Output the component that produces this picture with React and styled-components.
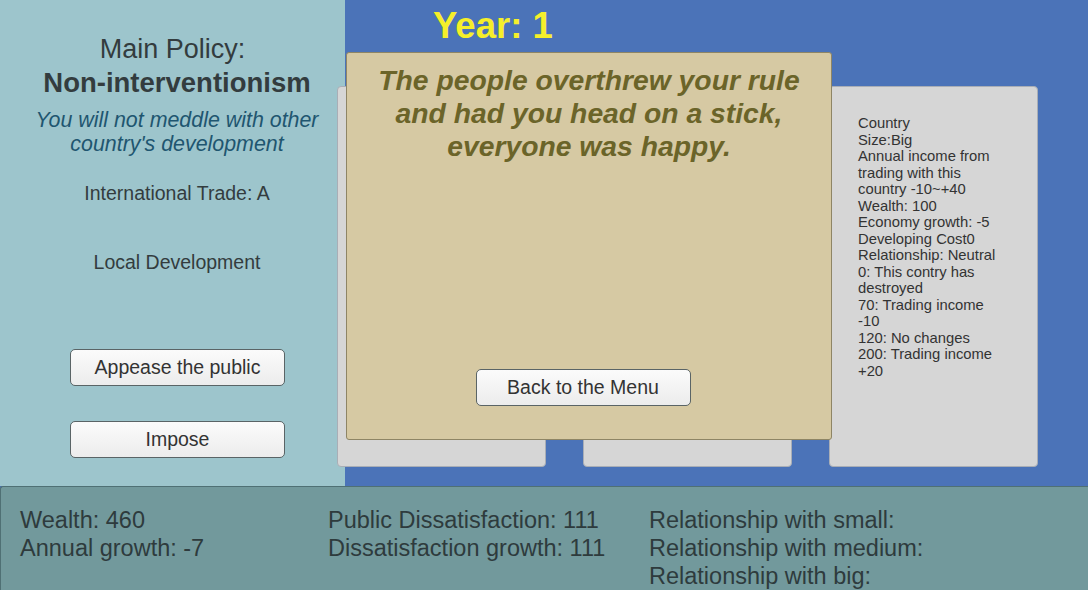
import React from "react";
import styled, { createGlobalStyle } from "styled-components";

const GlobalStyle = createGlobalStyle`
  html, body {
    margin: 0;
    padding: 0;
    background: #4b73b8;
  }
  * {
    box-sizing: border-box;
  }
  #root {
    width: 1088px;
    height: 590px;
    overflow: hidden;
    font-family: "Liberation Sans", Arial, sans-serif;
  }
`;

const Screen = styled.div`
  display: flex;
  flex-direction: column;
  width: 1088px;
  height: 590px;
`;

const Top = styled.div`
  display: flex;
  height: 486px;
`;

const PolicyPanel = styled.aside`
  width: 345px;
  flex-shrink: 0;
  background: #9dc5cc;
  display: flex;
  flex-direction: column;
  align-items: center;
  text-align: center;
  color: #333c3e;
  padding: 33px 0 0 9px;
`;

const PolicyLabel = styled.div`
  font-size: 27px;
  line-height: 32px;
  margin-left: -9px;
`;

const PolicyName = styled.div`
  font-size: 27.5px;
  line-height: 32px;
  font-weight: bold;
  margin-top: 2px;
`;

const PolicyDesc = styled.div`
  font-size: 21.4px;
  line-height: 24px;
  font-style: italic;
  color: #1f5670;
  margin-top: 9px;
`;

const Stat = styled.div`
  font-size: 19.5px;
  line-height: 22px;
  margin-top: ${({ gap }) => gap}px;
`;

const Button = styled.button`
  width: 215px;
  height: 37px;
  margin-top: ${({ gap }) => gap || 0}px;
  margin-left: ${({ shift }) => shift || 0}px;
  border: 1px solid #5a6466;
  border-radius: 5px;
  background: linear-gradient(#fbfbfb, #ececec);
  font-family: "Liberation Sans", Arial, sans-serif;
  font-size: 19.5px;
  color: #333;
  padding: 0;
  cursor: pointer;
`;

const Board = styled.main`
  position: relative;
  flex: 1;
  background: #4b73b8;
`;

const YearTitle = styled.h1`
  margin: 0;
  height: 86px;
  padding: 5px 0 0 88px;
  font-size: 36.5px;
  line-height: 42px;
  font-weight: bold;
  color: #f5ef2a;
`;

const CardRow = styled.div`
  display: flex;
  gap: 37px;
  margin-left: -8px;
`;

const Card = styled.div`
  width: 209px;
  height: 381px;
  background: #d6d6d6;
  border: 1px solid #a9aeb6;
  border-radius: 4px;
  padding: 28px 0 0 28px;
  font-size: 14.8px;
  line-height: 16.5px;
  color: #333;
  white-space: nowrap;
`;

const Modal = styled.div`
  position: absolute;
  left: 1px;
  top: 52px;
  width: 486px;
  height: 388px;
  background: #d6c9a3;
  border: 1px solid #8e8565;
  border-radius: 3px;
  display: flex;
  flex-direction: column;
  align-items: center;
  padding-top: 11px;
`;

const Message = styled.p`
  margin: 0;
  font-size: 28.3px;
  line-height: 33px;
  font-weight: bold;
  font-style: italic;
  text-align: center;
  color: #6b6429;
`;

const ModalFooter = styled.div`
  margin-top: auto;
  margin-bottom: 33px;
  padding-right: 12px;
`;

const StatusBar = styled.footer`
  flex: 1;
  background: #72999c;
  border-top: 1px solid #4f7074;
  border-left: 1px solid #4f7074;
  border-top-left-radius: 3px;
  display: flex;
  padding: 19px 0 0 19px;
  color: #2e3b3d;
  font-size: 23.5px;
  line-height: 28px;
  overflow: hidden;
`;

const StatusCol = styled.div`
  width: ${({ w }) => w}px;
  flex-shrink: 0;
  white-space: nowrap;
`;

const countryInfo = [
  "Country",
  "Size:Big",
  "Annual income from",
  "trading with this",
  "country -10~+40",
  "Wealth: 100",
  "Economy growth: -5",
  "Developing Cost0",
  "Relationship: Neutral",
  "0: This contry has",
  "destroyed",
  "70: Trading income",
  "-10",
  "120: No changes",
  "200: Trading income",
  "+20",
];

export default function App() {
  return (
    <>
      <GlobalStyle />
      <Screen>
        <Top>
          <PolicyPanel>
            <PolicyLabel>Main Policy:</PolicyLabel>
            <PolicyName>Non-interventionism</PolicyName>
            <PolicyDesc>
              You will not meddle with other
              <br />
              country's development
            </PolicyDesc>
            <Stat gap={26}>International Trade: A</Stat>
            <Stat gap={47}>Local Development</Stat>
            <Button gap={76} shift={1}>Appease the public</Button>
            <Button gap={35} shift={1}>Impose</Button>
          </PolicyPanel>
          <Board>
            <YearTitle>Year: 1</YearTitle>
            <CardRow>
              <Card />
              <Card />
              <Card>
                {countryInfo.map((line, i) => (
                  <div key={i}>{line}</div>
                ))}
              </Card>
            </CardRow>
            <Modal>
              <Message>
                The people overthrew your rule
                <br />
                and had you head on a stick,
                <br />
                everyone was happy.
              </Message>
              <ModalFooter>
                <Button>Back to the Menu</Button>
              </ModalFooter>
            </Modal>
          </Board>
        </Top>
        <StatusBar>
          <StatusCol w={308}>
            <div>Wealth: 460</div>
            <div>Annual growth: -7</div>
          </StatusCol>
          <StatusCol w={321}>
            <div>Public Dissatisfaction: 111</div>
            <div>Dissatisfaction growth: 111</div>
          </StatusCol>
          <StatusCol w={400}>
            <div>Relationship with small:</div>
            <div>Relationship with medium:</div>
            <div>Relationship with big:</div>
          </StatusCol>
        </StatusBar>
      </Screen>
    </>
  );
}
